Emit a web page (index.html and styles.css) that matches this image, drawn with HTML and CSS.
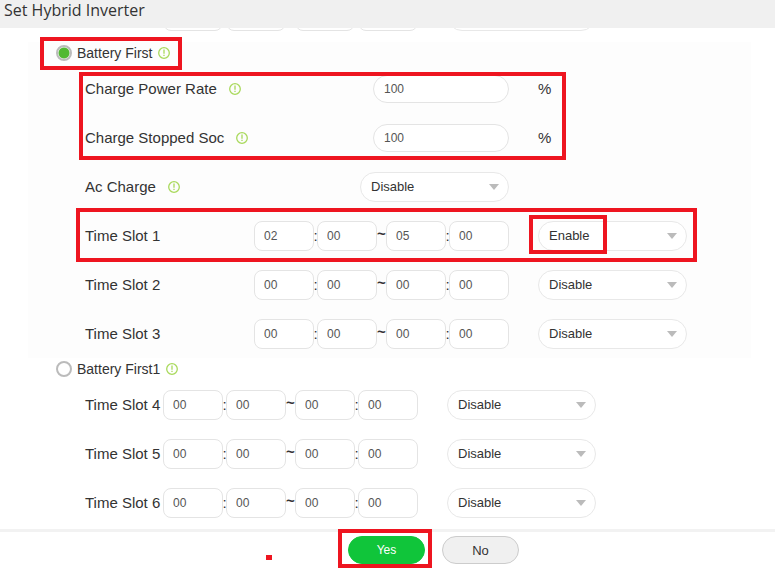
FILE: index.html
```html
<!DOCTYPE html>
<html lang="en">
<head>
    <meta charset="UTF-8">
    <meta name="viewport" content="width=device-width, initial-scale=1.0">
    <title>Set Hybrid Inverter</title>
    <link rel="stylesheet" href="styles.css">
</head>
<body>
    <header class="title-bar">
        <h1>Set Hybrid Inverter</h1>
    </header>

    <main class="settings">
        <div class="row narrow scrolled" id="scrolled-row"></div>

        <section class="group shaded">
            <div class="mode">
                <label class="mode-label marked"><input type="radio" name="mode" checked>Battery First
                    <svg class="info" viewBox="0 0 12 12"><circle cx="6" cy="6" r="5.3"/><path d="M6 2.6v4.2M6 7.8v1.2"/></svg>
                </label>
            </div>
            <div class="rates marked">
                <div class="row">
                    <label class="name" for="power-rate">Charge Power Rate
                        <svg class="info" viewBox="0 0 12 12"><circle cx="6" cy="6" r="5.3"/><path d="M6 2.6v4.2M6 7.8v1.2"/></svg>
                    </label>
                    <input class="rate" id="power-rate" type="text" value="100">
                    <span class="unit">%</span>
                </div>
                <div class="row">
                    <label class="name" for="stopped-soc">Charge Stopped Soc
                        <svg class="info" viewBox="0 0 12 12"><circle cx="6" cy="6" r="5.3"/><path d="M6 2.6v4.2M6 7.8v1.2"/></svg>
                    </label>
                    <input class="rate" id="stopped-soc" type="text" value="100">
                    <span class="unit">%</span>
                </div>
            </div>
            <div class="row">
                <label class="name" for="ac-charge">Ac Charge
                    <svg class="info" viewBox="0 0 12 12"><circle cx="6" cy="6" r="5.3"/><path d="M6 2.6v4.2M6 7.8v1.2"/></svg>
                </label>
                <div class="select">
                    <select id="ac-charge"><option>Disable</option><option>Enable</option></select>
                </div>
            </div>
            <div class="slots" data-first="1"></div>
        </section>

        <section class="group">
            <div class="mode">
                <label class="mode-label"><input type="radio" name="mode">Battery First1
                    <svg class="info" viewBox="0 0 12 12"><circle cx="6" cy="6" r="5.3"/><path d="M6 2.6v4.2M6 7.8v1.2"/></svg>
                </label>
            </div>
            <div class="slots" data-first="4"></div>
        </section>
    </main>

    <footer class="actions">
        <span class="dot"></span>
        <div class="confirm marked">
            <button class="btn btn-yes" type="button">Yes</button>
        </div>
        <button class="btn btn-no" type="button">No</button>
    </footer>

    <script src="slots.js"></script>
</body>
</html>
```
FILE: styles.css
```css
*,
*::before {
    box-sizing: border-box;
}

body {
    margin: 0;
    height: 100vh;
    display: flex;
    flex-direction: column;
    background-color: #fff;
    font-family: "Liberation Sans", Arial, sans-serif;
    font-size: 15px;
    color: #333;
    overflow: hidden;
}

input,
select,
button {
    margin: 0;
    font-family: inherit;
}

.title-bar {
    flex: none;
    height: 28px;
    padding: 0 4px;
    background-color: #f0f0f0;
}

.title-bar h1 {
    margin: 0;
    font-family: "Open Sans", "Noto Sans", sans-serif;
    font-size: 16px;
    font-weight: normal;
    line-height: 20px;
}

/* the list is scrolled down to its end */
.settings {
    flex: 1;
    min-height: 0;
    display: flex;
    flex-direction: column;
    justify-content: flex-end;
    padding-bottom: 2px;
    overflow: hidden;
}

.group {
    flex: none;
    margin: 0 24px 0 28px;
}

.shaded {
    background-color: #fdfdfd;
}

.mode {
    height: 22px;
    padding-left: 28px;
    display: flex;
    align-items: center;
}

.mode-label {
    display: flex;
    align-items: center;
    font-size: 14px;
}

.mode-label input {
    appearance: none;
    width: 16px;
    height: 16px;
    margin-right: 5px;
    border: 2px solid #bbb;
    border-radius: 50%;
    background-color: #fff;
}

.mode-label input:checked {
    background: radial-gradient(circle, #52b933 5px, #fff 6px) border-box;
}

.info {
    flex: none;
    width: 12px;
    height: 12px;
    margin-left: 6px;
    fill: none;
    stroke: #a9d95c;
    stroke-width: 1.3;
}

.name .info {
    margin-left: 12px;
}

.row {
    height: 49px;
    margin-left: 57px;
    display: flex;
    align-items: center;
}

.scrolled {
    flex: none;
    margin: 0 0 2px 85px;
}

.name {
    width: 169px;
    display: flex;
    align-items: center;
    white-space: nowrap;
}

.narrow .name {
    width: 78px;
}

.rate,
.time input {
    border: 1px solid #e4e4e4;
    background-color: #fff;
    font-size: 12px;
    color: #555;
}

.rate {
    width: 136px;
    height: 28px;
    margin-left: 119px;
    padding: 0 10px;
    border-radius: 14px;
}

.unit {
    margin-left: 29px;
}

.time {
    display: flex;
    align-items: center;
}

.time input {
    width: 60px;
    height: 30px;
    padding: 0 9px;
    border-radius: 8px;
}

.time span {
    width: 3px;
    display: flex;
    justify-content: center;
}

.time .to {
    width: 9px;
    padding-bottom: 4px;
    font-weight: bold;
}

.select {
    position: relative;
    width: 149px;
    margin-left: 29px;
}

.name + .select {
    margin-left: 106px;
}

.select select {
    appearance: none;
    display: block;
    width: 100%;
    height: 30px;
    padding: 0 10px;
    border: 1px solid #e8e8e8;
    border-radius: 15px;
    background-color: #fff;
    font-size: 13px;
    color: #333;
}

.select::after {
    content: "";
    position: absolute;
    top: 12px;
    right: 10px;
    border: 5px solid transparent;
    border-top: 6px solid #bbb;
    border-bottom: 0;
    pointer-events: none;
}

/* red highlight frames */
.marked {
    position: relative;
}

.marked::before {
    content: "";
    position: absolute;
    z-index: 1;
    border: 4px solid #ee1520;
    pointer-events: none;
}

.mode-label.marked::before {
    inset: -8px -12px -9px -16px;
}

.rates.marked::before {
    top: 8px;
    bottom: 2px;
    left: 51px;
    width: 487px;
}

.row.marked::before {
    top: -3px;
    bottom: -2px;
    left: -9px;
    width: 621px;
}

.select.marked::before {
    top: -6px;
    bottom: -3px;
    left: -9px;
    width: 78px;
}

.confirm.marked::before {
    inset: -7px -7px -4px -10px;
}

.actions {
    position: relative;
    flex: none;
    padding: 4px 0;
    padding-left: 348px;
    display: flex;
    gap: 17px;
    border-top: 3px solid #f2f2f2;
}

.btn {
    display: block;
    width: 77px;
    height: 28px;
    padding: 0;
    border: 1px solid #ccc;
    border-radius: 14px;
    background-color: #f0f0f0;
    font-size: 13px;
    color: #333;
}

.btn-yes {
    border-color: #10c53a;
    background-color: #10c53a;
    font-size: 12px;
    color: #fff;
}

.dot {
    position: absolute;
    top: 23px;
    left: 266px;
    width: 6px;
    height: 5px;
    background-color: #ee1520;
}
```
FILE: slots.js
```javascript
// start and end time of each slot: hour, minute, hour, minute
const times = {
    1: ['02', '00', '05', '00']
};
const enabled = [1];
const separators = ['<span>:</span>', '<span class="to">~</span>', '<span>:</span>', ''];
const blanks = ['<span></span>', '<span class="to"></span>', '<span></span>', ''];

function timeFields(values, name, between) {
    const parts = ['start hour', 'start minute', 'end hour', 'end minute'];
    return values.map((value, i) =>
        `<input type="text" aria-label="${name} ${parts[i]}" value="${value}">${between[i]}`
    ).join('');
}

function stateSelect(name, options, marked) {
    return `<div class="select${marked ? ' marked' : ''}">
        <select aria-label="${name} state">${options.map(o => `<option>${o}</option>`).join('')}</select>
    </div>`;
}

document.querySelectorAll('.slots').forEach(list => {
    const first = Number(list.dataset.first);
    for (let n = first; n < first + 3; n++) {
        const on = enabled.includes(n);
        const name = `Time Slot ${n}`;
        const row = document.createElement('div');
        row.className = 'row' + (first > 1 ? ' narrow' : '') + (on ? ' marked' : '');
        row.innerHTML = `<span class="name">${name}</span>
            <div class="time">${timeFields(times[n] || ['00', '00', '00', '00'], name, separators)}</div>
            ${stateSelect(name, on ? ['Enable', 'Disable'] : ['Disable', 'Enable'], on)}`;
        list.appendChild(row);
    }
});

// row that is mostly scrolled out of view
document.getElementById('scrolled-row').innerHTML = `<span class="name"></span>
    <div class="time">${timeFields(['', '', '', ''], 'Previous slot', blanks)}</div>
    ${stateSelect('Previous slot', [''], false)}`;
```
